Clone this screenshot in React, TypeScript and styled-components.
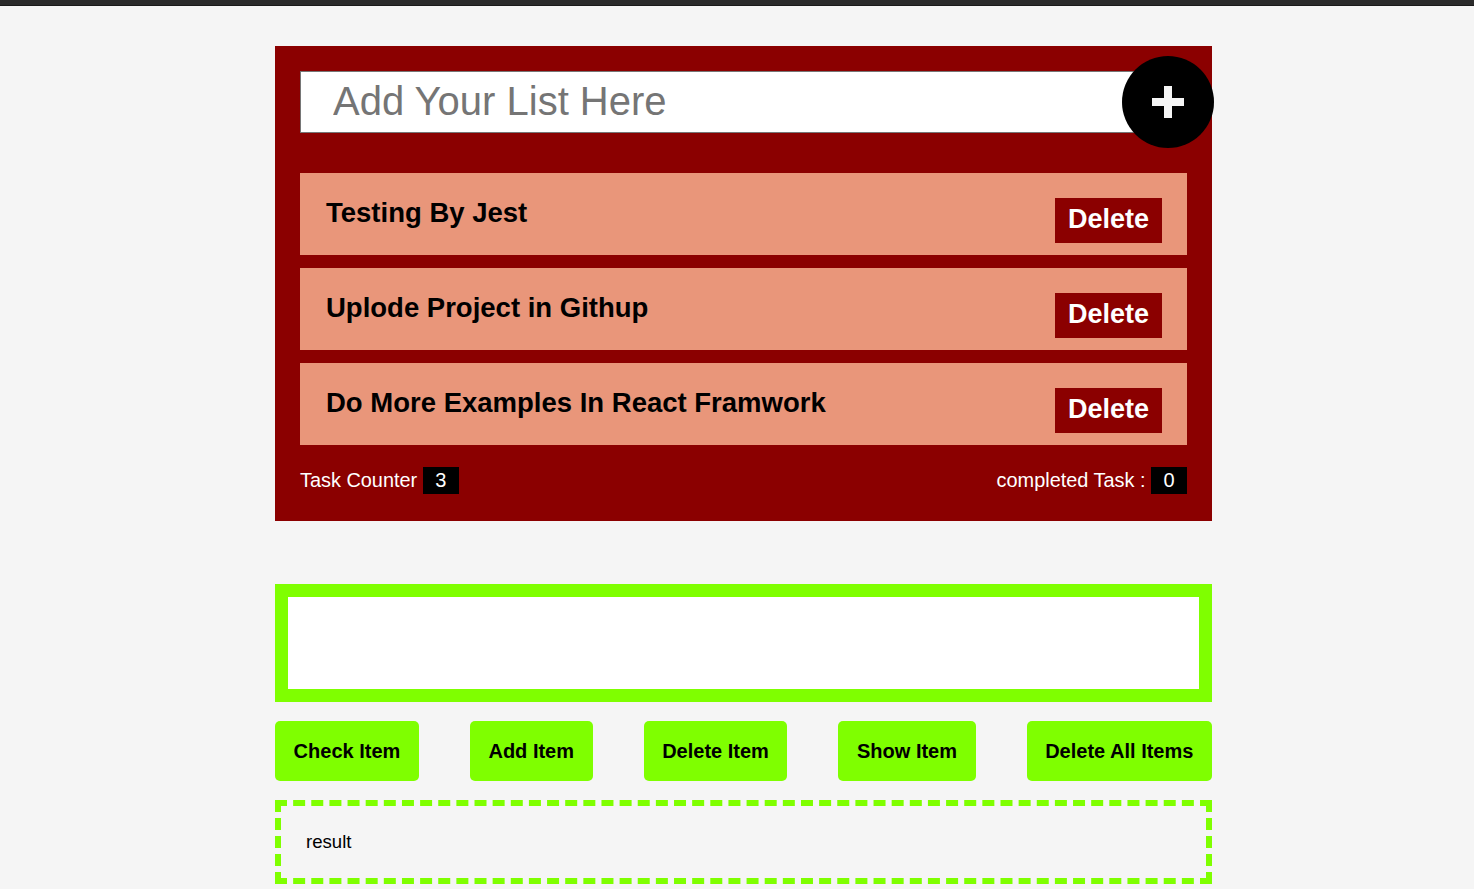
import React from "react";
import styled, { createGlobalStyle } from "styled-components";

const GlobalStyle = createGlobalStyle`
  * { box-sizing: border-box; }
  html, body { margin: 0; padding: 0; }
  body {
    background: #f5f5f5;
    font-family: "Liberation Sans", Arial, sans-serif;
    overflow: hidden;
  }
`;

const TopBar = styled.div`
  height: 6px;
  background: #2b2b2b;
  border-bottom: 1px solid #1a1a1a;
`;

const Main = styled.main`
  width: 937px;
  margin: 40px 0 0 275px;
`;

const Card = styled.section`
  background: #8b0000;
  padding: 25px 25px 27px;
`;

const InputRow = styled.div`
  position: relative;
  height: 62px;
`;

const TaskInput = styled.input`
  display: block;
  width: 100%;
  height: 62px;
  border: 1px solid #767676;
  background: #fff;
  padding: 0 0 2px 32px;
  font-family: "Liberation Sans", Arial, sans-serif;
  font-size: 40px;
  color: #222;
  outline: none;
  &::placeholder { color: #757575; }
`;

const AddButton = styled.button`
  position: absolute;
  top: -15px;
  right: -27px;
  width: 92px;
  height: 92px;
  border-radius: 50%;
  border: none;
  padding: 0;
  background: #000;
  display: flex;
  align-items: center;
  justify-content: center;
  cursor: pointer;
`;

const List = styled.ul`
  list-style: none;
  margin: 40px 0 0;
  padding: 0;
  display: flex;
  flex-direction: column;
  gap: 13px;
`;

const Item = styled.li`
  height: 82px;
  background: #e9967a;
  display: flex;
  justify-content: space-between;
  align-items: flex-start;
  padding: 0 25px 0 26px;
`;

const ItemTitle = styled.h2`
  margin: 24px 0 0;
  font-size: 27.5px;
  line-height: 31px;
  font-weight: 700;
  color: #000;
`;

const DeleteButton = styled.button`
  margin-top: 25px;
  background: #8b0000;
  color: #fff;
  border: none;
  padding: 6px 13px 8px;
  font-family: "Liberation Sans", Arial, sans-serif;
  font-size: 27px;
  line-height: 31px;
  font-weight: 700;
  cursor: pointer;
`;

const Footer = styled.div`
  margin-top: 22px;
  display: flex;
  justify-content: space-between;
  align-items: baseline;
  height: 27px;
`;

const FooterText = styled.span`
  color: #fff;
  font-size: 19.9px;
  line-height: 27px;
`;

const Badge = styled.span`
  display: inline-block;
  background: #000;
  color: #fff;
  font-size: 20px;
  line-height: 27px;
  height: 27px;
  width: 36px;
  text-align: center;
  vertical-align: baseline;
`;

const TextPanel = styled.div`
  margin-top: 63px;
  height: 118px;
  border: 13px solid #7fff00;
  background: #fff;
`;

const ButtonRow = styled.div`
  margin-top: 19px;
  display: flex;
  justify-content: space-between;
`;

const ActionButton = styled.button`
  height: 60px;
  padding: 0 18.6px;
  border: none;
  border-radius: 5px;
  background: #7fff00;
  color: #000;
  font-family: "Liberation Sans", Arial, sans-serif;
  font-size: 20px;
  font-weight: 700;
  cursor: pointer;
`;

const ResultBox = styled.div`
  margin-top: 19px;
  height: 84px;
  border: 6px dashed #7fff00;
  display: flex;
  align-items: center;
  padding: 0 25px;
  font-size: 18.6px;
  color: #000;
`;

const PlusIcon = () => (
  <svg width="32" height="32" viewBox="0 0 32 32" aria-hidden="true">
    <rect x="0" y="12" width="32" height="8" fill="#f5f5f5" />
    <rect x="12" y="0" width="8" height="32" fill="#f5f5f5" />
  </svg>
);

const tasks = [
  "Testing By Jest",
  "Uplode Project in Githup",
  "Do More Examples In React Framwork",
];

const actions = ["Check Item", "Add Item", "Delete Item", "Show Item", "Delete All Items"];

export default function App() {
  return (
    <>
      <GlobalStyle />
      <TopBar />
      <Main>
        <Card>
          <InputRow>
            <TaskInput placeholder="Add Your List Here" />
            <AddButton aria-label="add">
              <PlusIcon />
            </AddButton>
          </InputRow>
          <List>
            {tasks.map((t) => (
              <Item key={t}>
                <ItemTitle>{t}</ItemTitle>
                <DeleteButton>Delete</DeleteButton>
              </Item>
            ))}
          </List>
          <Footer>
            <FooterText>
              Task Counter <Badge>3</Badge>
            </FooterText>
            <FooterText>
              completed Task : <Badge>0</Badge>
            </FooterText>
          </Footer>
        </Card>
        <TextPanel />
        <ButtonRow>
          {actions.map((a) => (
            <ActionButton key={a}>{a}</ActionButton>
          ))}
        </ButtonRow>
        <ResultBox>result</ResultBox>
      </Main>
    </>
  );
}
